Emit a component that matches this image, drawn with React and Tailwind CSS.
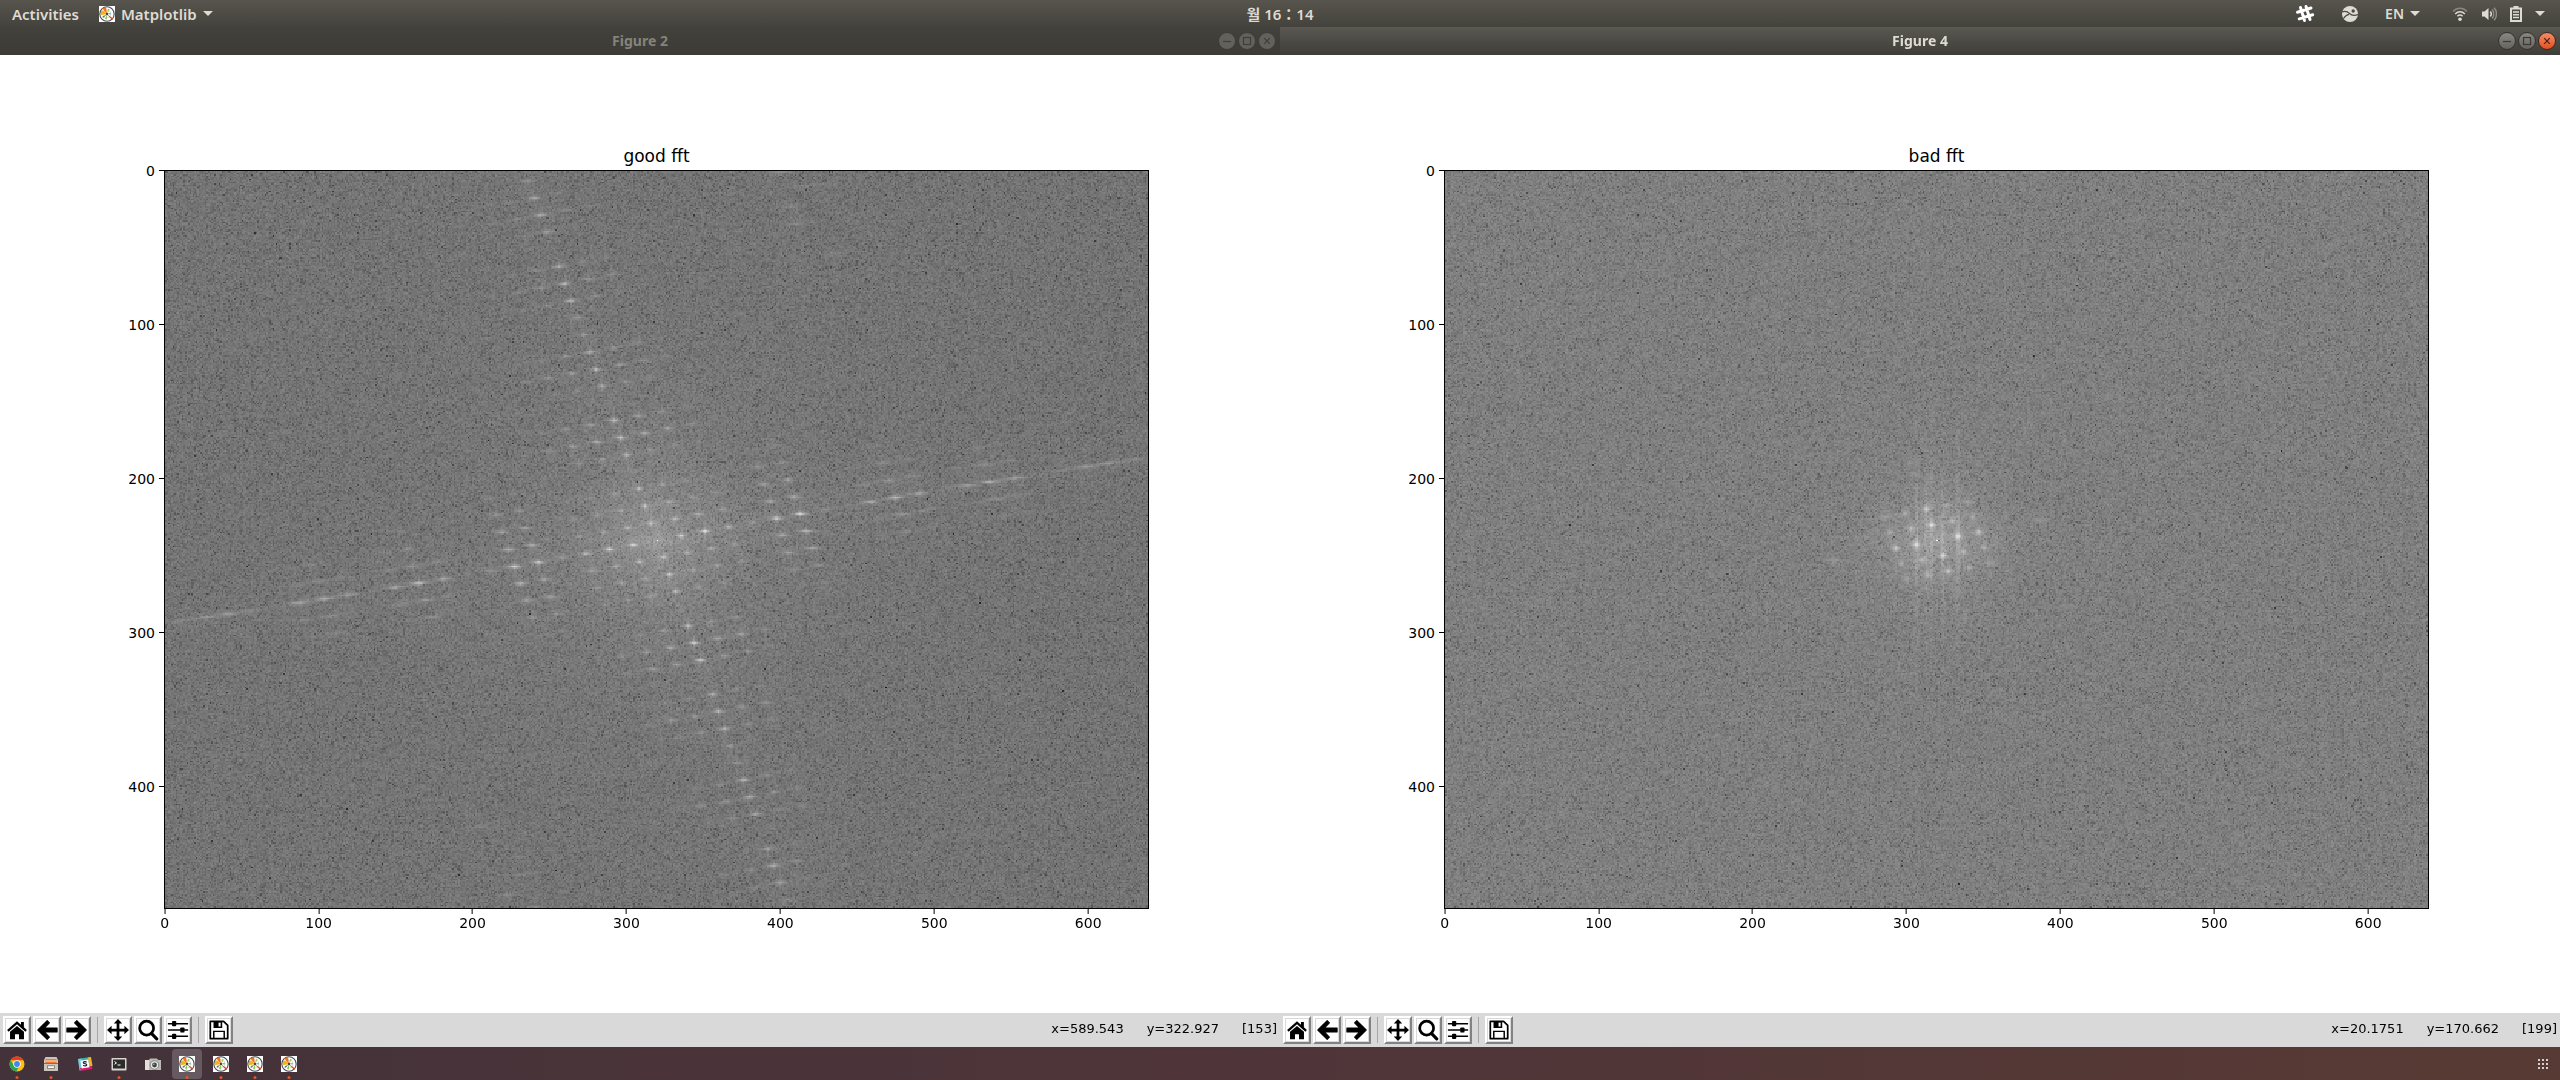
import React, { useEffect, useRef } from "react";

const DATA_W = 640;
const DATA_H = 480;

function makeRandom(seed) {
  let s = seed;
  return () => {
    s = (s + 0x6d2b79f5) | 0;
    let t = Math.imul(s ^ (s >>> 15), 1 | s);
    t = (t + Math.imul(t ^ (t >>> 7), 61 | t)) ^ t;
    return ((t ^ (t >>> 14)) >>> 0) / 4294967296;
  };
}

// Strength of each harmonic, as grey levels above the noise floor.
const GOOD_N = [70, 52, 64, 58, 10, 60, 74, 64, 8, 52, 66, 58, 34, 30, 52, 60, 50, 6, 40, 50, 44, 24];
const GOOD_M = [70, 66, 80, 54, 28, 76, 80, 24, 10, 48, 62, 50, 6, 40, 54, 46, 8, 22, 36, 34, 20];
const GOOD_SIDE = [0, 30, 38, 52, 66, 90];

// Faint cross terms, mirrored through the centre.
const GOOD_FAR = [
  [10, -16, 16],
  [10, -17, 18],
  [11, -18, 20],
  [10, -19, 22],
  [10, -20, 18],
  [11, -14, 14],
];

const BAD_N = [70, 58, 54, 8, 0, 18];
const BAD_M = [70, 64, 54, 6, 0, 20];

const SPECTRA = {
  good: {
    seed: 7,
    floor: 119,
    peaks() {
      const out = [];
      const add = (m, n, a) => {
        const am = Math.abs(m);
        const an = Math.abs(n);
        out.push({
          x: 320 + m * 15.5 + n * 4.0,
          y: 240 + m * (-2.95 + 0.016 * am) + n * 11.15,
          a,
          sx: 1.3 + am * 0.27 + an * 0.1,
          sy: 0.9,
          tilt: am > 6 || an > 10 ? -0.07 : 0,
        });
      };
      for (let m = -20; m <= 20; m++) {
        for (let n = -21; n <= 21; n++) {
          if (m === 0 && n === 0) continue;
          const am = Math.abs(m);
          const an = Math.abs(n);
          let a;
          if (am >= an) a = GOOD_M[am] - (GOOD_SIDE[an] ?? 90);
          else a = GOOD_N[an] - (GOOD_SIDE[am] ?? 90);
          if (am > 0 && an > 0 && am <= 3 && an <= 3) a = 44 - 8 * (am + an - 2);
          if (a >= 6) add(m, n, a);
        }
      }
      for (const [m, n, a] of GOOD_FAR) {
        add(m, n, a);
        add(-m, -n, a);
      }
      return out;
    },
    glow(dx, dy) {
      const r = Math.hypot(dx, dy);
      const across = Math.abs(dx * 0.17 + dy);
      const along = Math.abs(dx - dy * 0.36);
      return (
        8 * Math.exp(-(r * r) / 1800) +
        15 * Math.exp(-r / 70) +
        6 * Math.exp(-across / 16) * Math.exp(-r / 170) +
        5 * Math.exp(-along / 16) * Math.exp(-r / 170) +
        6 * Math.exp(-Math.abs(dx) / 2) * Math.exp(-Math.abs(dy) / 60) +
        6 * Math.exp(-Math.abs(dy) / 2) * Math.exp(-Math.abs(dx) / 60)
      );
    },
  },
  bad: {
    seed: 29,
    floor: 130,
    peaks() {
      const out = [];
      for (let m = -5; m <= 5; m++) {
        for (let n = -5; n <= 5; n++) {
          if (m === 0 && n === 0) continue;
          const am = Math.abs(m);
          const an = Math.abs(n);
          let a;
          if (n === 0) a = BAD_M[am];
          else if (m === 0) a = BAD_N[an];
          else if (am <= 2 && an <= 2) a = 40 - 8 * (am + an - 2);
          else a = 0;
          if (a < 6) continue;
          out.push({ x: 320 + m * 13.5 + n * 3.6, y: 240 - m * 2.6 + n * 10.1, a, sx: 1.6 + (am > 3 ? 2 : 0), sy: 1.5, tilt: 0 });
        }
      }
      return out;
    },
    glow(dx, dy) {
      const r2 = (dx * dx) / 1300 + (dy * dy) / 800;
      const streaks = [-13.5, -7, -3.6, 3.6, 13.5];
      let s = 15 * Math.exp(-r2) + 9 * Math.exp(-Math.hypot(dx, dy) / 36);
      s += 8 * Math.exp(-Math.abs(dy) / 5) * Math.exp(-Math.abs(dx) / 36);
      for (const c of streaks) s += 15 * Math.exp(-((dx - c) ** 2) / 1.6) * Math.exp(-((dy / 56) ** 2));
      return s;
    },
  },
};

function paintSpectrum(ctx, spec) {
  const rand = makeRandom(spec.seed);
  const total = DATA_W * DATA_H;
  const bright = new Float32Array(total);
  for (const p of spec.peaks()) {
    const x0 = Math.round(p.x);
    const y0 = Math.round(p.y);
    for (let y = Math.max(0, y0 - 12); y <= Math.min(DATA_H - 1, y0 + 12); y++) {
      for (let x = Math.max(0, x0 - 20); x <= Math.min(DATA_W - 1, x0 + 20); x++) {
        const dx = Math.abs(x - p.x);
        const dy = Math.abs(y - p.y - (x - p.x) * p.tilt);
        const core = Math.exp(-((dx / (p.sx * 1.3)) ** 1.4) - (dy / p.sy) ** 1.2);
        const arm = 0.3 * Math.exp(-dx * 1.6 - dy / 3.5) + 0.2 * Math.exp(-dy * 1.6 - dx / (2.5 + p.sx * 0.5));
        const v = p.a * Math.min(1, core + arm);
        const i = y * DATA_W + x;
        if (v > bright[i]) bright[i] = v;
      }
    }
  }
  const img = ctx.createImageData(DATA_W, DATA_H);
  for (let i = 0; i < total; i++) {
    const noise = 8 * Math.log(-Math.log(1 - rand() * 0.999999) + 1e-7);
    const damp = 1 / (1 + bright[i] / 18);
    const level = spec.glow((i % DATA_W) - 320, Math.floor(i / DATA_W) - 240);
    let g = spec.floor + level + noise * damp + bright[i];
    if (i === 240 * DATA_W + 320) g = 255;
    g = Math.max(0, Math.min(255, g));
    img.data[i * 4] = g;
    img.data[i * 4 + 1] = g;
    img.data[i * 4 + 2] = g;
    img.data[i * 4 + 3] = 255;
  }
  ctx.putImageData(img, 0, 0);
}

function Spectrum({ kind, label }) {
  const ref = useRef(null);
  useEffect(() => {
    paintSpectrum(ref.current.getContext("2d"), SPECTRA[kind]);
  }, [kind]);
  return (
    <canvas ref={ref} width={DATA_W} height={DATA_H} role="img" aria-label={label} className="block w-full border border-black [image-rendering:pixelated]" />
  );
}

const X_TICKS = [0, 100, 200, 300, 400, 500, 600];
const Y_TICKS = [0, 100, 200, 300, 400];

function Plot({ title, kind }) {
  return (
    <div className="grid flex-1 grid-cols-[164fr_985fr_131fr] content-start bg-white pt-[91px] font-['DejaVu_Sans',sans-serif] text-sm leading-4 text-black">
      <h2 className="col-start-2 pb-1 text-center text-[17px] leading-5">{title}</h2>
      <div className="relative col-start-1 row-start-2">
        {Y_TICKS.map((t) => (
          <div key={t} className="absolute right-0 flex -translate-y-1/2 items-center gap-1" style={{ top: `${((t + 0.5) / DATA_H) * 100}%` }}>
            <span>{t}</span>
            <span className="h-px w-[5px] bg-black" />
          </div>
        ))}
      </div>
      <div className="col-start-2 row-start-2">
        <Spectrum kind={kind} label={title} />
      </div>
      <div className="relative col-start-2 row-start-3 h-6">
        {X_TICKS.map((t) => (
          <div key={t} className="absolute top-0 flex -translate-x-1/2 flex-col items-center gap-px" style={{ left: `${((t + 0.5) / DATA_W) * 100}%` }}>
            <span className="h-[5px] w-px bg-black" />
            <span>{t}</span>
          </div>
        ))}
      </div>
    </div>
  );
}

function WinButton({ kind, active, label }) {
  const hot = active && kind === "close";
  const look = hot
    ? "bg-linear-to-b from-[#f58a66] to-[#e2501c] text-[#4a2010] border-[#3a2a22]"
    : active
      ? "bg-linear-to-b from-[#8a8882] to-[#66645e] text-[#3a3934] border-[#33322d]"
      : "bg-[#62615b] text-[#3f3e39] border-[#3c3b37]";
  return (
    <button aria-label={label} className={`flex size-[18px] items-center justify-center rounded-full border ${look}`}>
      <svg viewBox="0 0 16 16" className="size-4" fill="none" stroke="currentColor" strokeWidth="1.2">
        {kind === "min" && <path d="M4 8.5h8" />}
        {kind === "max" && <rect x="4.5" y="4.5" width="7" height="7" />}
        {kind === "close" && <path d="M5.2 5.2l5.6 5.6M10.8 5.2l-5.6 5.6" />}
      </svg>
    </button>
  );
}

function TitleBar({ title, active }) {
  const look = active ? "bg-linear-to-b from-[#5a5850] to-[#3e3d39] text-[#dfdbd2]" : "bg-linear-to-b from-[#42413b] to-[#3c3b37] text-[#85837b]";
  return (
    <header className={`grid h-7 grid-cols-[1fr_auto_1fr] items-center px-1 ${look}`}>
      <h1 className="col-start-2 font-['Noto_Sans',sans-serif] text-sm leading-5 font-bold">{title}</h1>
      <div className="flex justify-end gap-0.5">
        <WinButton kind="min" active={active} label="Minimize" />
        <WinButton kind="max" active={active} label="Maximize" />
        <WinButton kind="close" active={active} label="Close" />
      </div>
    </header>
  );
}

const TOOL_ICONS = {
  home: (
    <>
      <path d="M12 2.5L1.2 12l1.6 1.8L12 5.8l9.2 8 1.6-1.8-3.3-3V3.4h-3.2v2.9z" />
      <path d="M12 7.6L4.4 14v8.2h5.4v-5.6h4.4v5.6h5.4V14z" />
    </>
  ),
  back: <path d="M12.2 1.8l2.4 2.4-5.5 5.7H23v4.2H9.1l5.5 5.7-2.4 2.4L2 12z" stroke="currentColor" strokeWidth="1.2" strokeLinejoin="round" />,
  forward: <path d="M11.8 1.8L9.4 4.2l5.5 5.7H1v4.2h13.9l-5.5 5.7 2.4 2.4L22 12z" stroke="currentColor" strokeWidth="1.2" strokeLinejoin="round" />,
  pan: <path d="M12 0l4.600 5h-3.100v5.500H19V7.400l5 4.600-5 4.600v-3.100h-5.500V19h3.100L12 24l-4.600-5h3.100v-5.500H5v3.100L0 12l5-4.600v3.100h5.500V5H7.400z" />,
  zoom: (
    <g fill="none" stroke="currentColor" strokeLinecap="round">
      <circle cx="10.500" cy="10" r="7.600" strokeWidth="3" />
      <path d="M16 16l5.500 5.700" strokeWidth="3.400" />
    </g>
  ),
  sliders: (
    <>
      <path d="M1 4.300h22v1.600H1zM1 11.200h22v1.600H1zM1 18.100h22v1.600H1z" />
      <rect x="5.500" y="2.300" width="4.600" height="5.600" rx="1" />
      <rect x="14.500" y="9.200" width="4.600" height="5.600" rx="1" />
      <rect x="5.500" y="16.100" width="4.600" height="5.600" rx="1" />
    </>
  ),
  save: (
    <>
      <path d="M2.500 2.500H17L21.500 7v14.500h-19z" fill="none" stroke="currentColor" strokeWidth="1.900" strokeLinejoin="round" />
      <path d="M6 2.500h9.500v7.200H6zm5.500 1.300v4.400h2.300V3.800z" fillRule="evenodd" />
      <path d="M6.300 21v-7.500h11.400V21" fill="none" stroke="currentColor" strokeWidth="1.600" />
    </>
  ),
};

function Tool({ icon, label }) {
  return (
    <button aria-label={label} className="flex size-7 items-center justify-center border-2 border-t-white border-r-[#828282] border-b-[#828282] border-l-white bg-white text-black outline-1 -outline-offset-3 outline-[#d9d9d9]">
      <svg viewBox="0 0 24 24" className="size-[22px] shrink-0" fill="currentColor">{TOOL_ICONS[icon]}</svg>
    </button>
  );
}

function Toolbar({ x, y, value }) {
  return (
    <footer className="flex h-[34px] items-center justify-between bg-[#d9d9d9] px-[3px] font-['DejaVu_Sans',sans-serif] text-[13px] text-black">
      <div className="flex items-center gap-1.5">
        <div className="flex gap-0.5">
          <Tool icon="home" label="Home" />
          <Tool icon="back" label="Back" />
          <Tool icon="forward" label="Forward" />
        </div>
        <span className="h-[26px] w-px bg-[#a6a6a6]" />
        <div className="flex gap-0.5">
          <Tool icon="pan" label="Pan" />
          <Tool icon="zoom" label="Zoom" />
          <Tool icon="sliders" label="Subplots" />
        </div>
        <span className="h-[26px] w-px bg-[#a6a6a6]" />
        <Tool icon="save" label="Save" />
      </div>
      <p className="flex gap-[23px] pb-0.5">
        <span>x={x}</span>
        <span>y={y}</span>
        <span>[{value}]</span>
      </p>
    </footer>
  );
}

function FigureWindow({ name, active, title, kind, x, y, value }) {
  return (
    <section className="flex min-w-0 flex-1 flex-col">
      <TitleBar title={name} active={active} />
      <Plot title={title} kind={kind} />
      <Toolbar x={x} y={y} value={value} />
    </section>
  );
}

function MplIcon() {
  return (
    <svg viewBox="0 0 16 16" className="size-4">
      <rect width="16" height="16" fill="#fff" />
      <circle cx="8" cy="8" r="7.200" fill="#fff" stroke="#3f4a55" strokeWidth="1.100" />
      <circle cx="8" cy="8" r="4" fill="none" stroke="#c8ccd0" strokeWidth="0.600" />
      <path d="M8 8L3.200 2.300l3.800-1.300z" fill="#f0701c" />
      <path d="M8 8L1.600 9.200 2.200 4.800l2.400-.2z" fill="#f2b41c" />
      <path d="M8 8L9 2.800l1.800.6z" fill="#9ccc50" />
      <path d="M8 8l-2 5 2 .4z" fill="#8cc860" />
      <path d="M8 8l3.700-1.200.2 1.600z" fill="#70b8a0" />
      <path d="M7.500 8L13.200 14l1.200-1.400z" fill="#d8501c" />
      <path d="M8 8L4.400 11.800l-1.200-.9z" fill="#4e5a48" />
      <circle cx="8" cy="8" r="1.200" fill="#3a4a40" />
    </svg>
  );
}

function Caret() {
  return (
    <svg viewBox="0 0 10 5" className="h-[5px] w-[10px]" fill="currentColor">
      <path d="M0 0h10L5 5z" />
    </svg>
  );
}

function TopPanel() {
  return (
    <nav className="grid h-[27px] grid-cols-[1fr_auto_1fr] items-center bg-linear-to-b from-[#57554d] to-[#43423c] px-3 font-['Noto_Sans','Noto_Sans_CJK_KR',sans-serif] text-[15px] leading-5 font-semibold text-[#dfdbd2]">
      <div className="flex items-center gap-5">
        <button>Activities</button>
        <button className="flex items-center gap-1.5">
          <MplIcon />
          <span>Matplotlib</span>
          <Caret />
        </button>
      </div>
      <button className="whitespace-pre">월 16：14</button>
      <div className="flex items-center justify-end pr-[3px]">
        <button aria-label="Slack" className="mr-[27px]">
          <svg viewBox="0 0 20 20" className="size-5" fill="none" stroke="#fff" strokeWidth="3" strokeLinecap="round">
            <path d="M5.500 3.500l4 13M11 2.500l4 13M2.500 8.200l13.500-4.200M4.200 14.900l13.500-4.200" />
          </svg>
        </button>
        <button aria-label="Updates" className="mr-[27px]">
          <svg viewBox="0 0 16 16" className="size-4">
            <circle cx="8" cy="8" r="8" fill="#dfdbd2" />
            <path d="M0 6c3.500-1.500 5.500-.5 7.500 1.500S12 10 16 8.500M1.500 12.500c1.500-2.500 3-3.800 5.500-4.200" fill="none" stroke="#4b4a43" strokeWidth="1.200" />
            <circle cx="11.200" cy="5" r="1.700" fill="#4b4a43" />
          </svg>
        </button>
        <button className="mr-[32px] flex items-center gap-1.5 text-sm leading-5">
          <span>EN</span>
          <Caret />
        </button>
        <button aria-label="System menu" className="flex items-center gap-[13px]">
          <svg viewBox="0 0 16 16" className="size-4" fill="none" stroke="currentColor" strokeWidth="1.500">
            <path d="M1 5.500C5 1.200 11 1.200 15 5.500" opacity="0.400" />
            <path d="M3.200 8C6 5 10 5 12.800 8" />
            <path d="M5.400 10.300c1.600-1.500 3.600-1.500 5.200 0" />
            <circle cx="8" cy="13.300" r="1.800" fill="currentColor" stroke="none" />
          </svg>
          <svg viewBox="0 0 16 16" className="size-4" fill="none" stroke="currentColor" strokeWidth="1.400">
            <path d="M1 5.500h2.500L7.500 2v12l-4-3.500H1z" fill="currentColor" stroke="none" />
            <path d="M9.300 5.500c1.300 1.500 1.300 3.500 0 5" />
            <path d="M11 3.400c2.500 2.600 2.500 6.600 0 9.200M13 1.800c3.300 3.600 3.300 8.800 0 12.400" opacity="0.450" />
          </svg>
          <svg viewBox="0 0 12 16" className="h-4 w-3" fill="none" stroke="currentColor">
            <path d="M1 2.500h10v12.500H1z" strokeWidth="2" />
            <path d="M3.500 1h5" strokeWidth="2" />
            <path d="M3 6h6M3 8.800h6M3 11.600h6" strokeWidth="1.500" />
          </svg>
          <Caret />
        </button>
      </div>
    </nav>
  );
}

const APP_ICONS = {
  chrome: (
    <svg viewBox="0 0 16 16" className="size-4">
      <circle cx="8" cy="8" r="7.500" fill="#fbc116" />
      <path d="M1.500 4.300A7.500 7.500 0 0114.500 4.300H8z" fill="#e33b2e" />
      <path d="M1.500 4.300A7.500 7.500 0 007.400 15.500L9.800 11 5 9.500z" fill="#2fa24e" />
      <circle cx="8" cy="8" r="3.700" fill="#fff" />
      <circle cx="8" cy="8" r="2.900" fill="#4285f4" />
    </svg>
  ),
  files: (
    <svg viewBox="0 0 16 16" className="size-4">
      <path d="M2.500 1h11l1.500 3v11H1V4z" fill="#c9c5bc" />
      <path d="M2.500 3h11v4h-11z" fill="#f07830" />
      <path d="M2.500 4.500h11v1h-11z" fill="#fbe4d0" />
      <path d="M1 7h14v1H1z" fill="#77736b" />
      <rect x="4.500" y="9.800" width="7" height="2.600" fill="#f8f7f4" stroke="#77736b" strokeWidth="0.800" />
    </svg>
  ),
  slack: (
    <svg viewBox="0 0 16 16" className="size-4">
      <path d="M1 3l12-2 .5 3L2 8z" fill="#36b5a8" />
      <path d="M11 1.500l3-.5 1.500 9-3 .6z" fill="#e8b52c" />
      <path d="M1 3l3.500-.6L6 14l-3.500.6z" fill="#70cadb" />
      <path d="M3 12l12-2 .4 3L4 15z" fill="#e01765" />
      <rect x="4" y="4" width="8" height="8" fill="#fff" transform="rotate(-9 8 8)" />
      <path d="M9.600 6.300c-1-1-3.400-.7-3.200.5.200 1 3.200.6 3.300 1.900.1 1.300-2.500 1.500-3.500.4" fill="none" stroke="#2e2340" strokeWidth="1.300" />
    </svg>
  ),
  terminal: (
    <svg viewBox="0 0 16 16" className="size-4">
      <rect x="0.500" y="2" width="15" height="12.500" rx="0.800" fill="#d8d6d0" />
      <rect x="2" y="3.500" width="12" height="9" fill="#2c2b2b" />
      <path d="M3.500 5.500l2 1.400-2 1.400M6.500 9h3" fill="none" stroke="#fff" strokeWidth="1" />
    </svg>
  ),
  camera: (
    <svg viewBox="0 0 16 16" className="size-4">
      <path d="M0 4h4l1-1.500h7L13 4h3v10H0z" fill="#bcbab5" />
      <path d="M0 4h4v10H0z" fill="#e2e0dc" />
      <circle cx="9.500" cy="9" r="4.300" fill="#e8e7e4" stroke="#76746f" strokeWidth="0.800" />
      <circle cx="9.500" cy="9" r="2.400" fill="#3f4650" />
      <circle cx="8.800" cy="8.200" r="0.800" fill="#9ab0c8" />
    </svg>
  ),
  figure: <MplIcon />,
};

const APPS = [
  { icon: "chrome", label: "Chrome", running: true },
  { icon: "files", label: "Files", running: true },
  { icon: "slack", label: "Slack" },
  { icon: "terminal", label: "Terminal", running: true },
  { icon: "camera", label: "Screenshot" },
  { icon: "figure", label: "Figure 4", running: true, active: true },
  { icon: "figure", label: "Figure 3", running: true },
  { icon: "figure", label: "Figure 2", running: true },
  { icon: "figure", label: "Figure 1", running: true },
];

function Dock() {
  return (
    <nav className="flex h-[33px] items-center justify-between bg-linear-to-r from-[#43323a] via-[#4f3539] to-[#583a34] pr-3 pl-0.5">
      <div className="flex gap-1">
        {APPS.map((app) => (
          <button key={app.label} aria-label={app.label} className={`relative flex size-[30px] items-center justify-center rounded ${app.active ? "bg-[#665a60]" : ""}`}>
            {APP_ICONS[app.icon]}
            {app.running && <span className="absolute bottom-0 left-1/2 size-[3px] -translate-x-1/2 rounded-full bg-[#e95420]" />}
          </button>
        ))}
      </div>
      <button aria-label="Show applications">
        <svg viewBox="0 0 10 10" className="size-[10px]" fill="#d6cfcc">
          {[0, 4, 8].map((cy) => [0, 4, 8].map((cx) => <rect key={`${cx}-${cy}`} x={cx} y={cy} width="2" height="2" />))}
        </svg>
      </button>
    </nav>
  );
}

export default function App() {
  return (
    <div className="flex min-h-screen flex-col bg-white">
      <TopPanel />
      <main className="flex flex-1">
        <FigureWindow name="Figure 2" title="good fft" kind="good" x="589.543" y="322.927" value="153" />
        <FigureWindow name="Figure 4" active title="bad fft" kind="bad" x="20.1751" y="170.662" value="199" />
      </main>
      <Dock />
    </div>
  );
}
